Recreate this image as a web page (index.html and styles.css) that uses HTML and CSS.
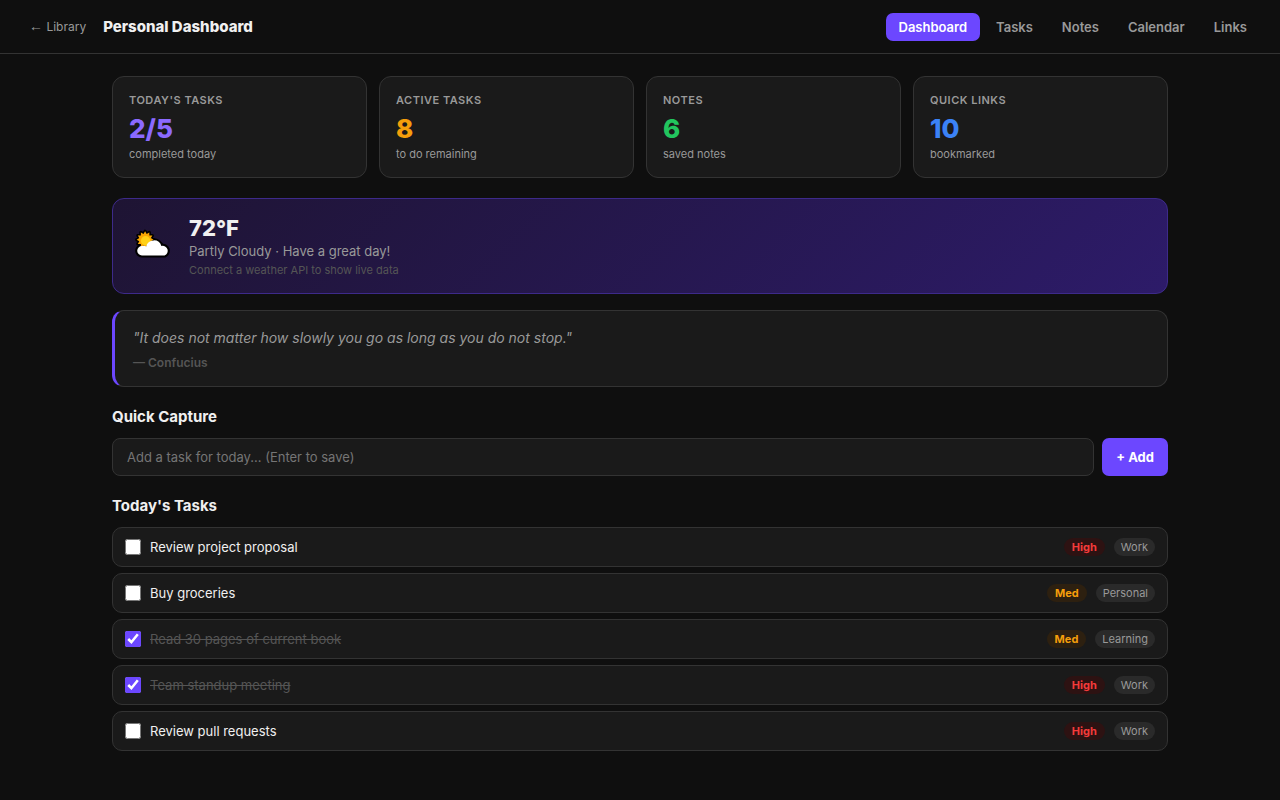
FILE: index.html
```html
<!DOCTYPE html>
<html lang="en">
<head>
    <meta charset="UTF-8">
    <meta name="viewport" content="width=device-width, initial-scale=1.0">
    <title>Personal Dashboard</title>
    <link rel="stylesheet" href="styles.css">
</head>
<body>
    <header class="topbar">
        <a class="back" href="#library"><span class="arrow">←</span> Library</a>
        <h1 class="title">Personal Dashboard</h1>
        <nav class="nav">
            <button class="nav-btn active">Dashboard</button>
            <button class="nav-btn">Tasks</button>
            <button class="nav-btn">Notes</button>
            <button class="nav-btn">Calendar</button>
            <button class="nav-btn">Links</button>
        </nav>
    </header>

    <main class="page">
        <div class="stats">
            <div class="stat">
                <div class="stat-label">Today's Tasks</div>
                <div class="stat-value purple">2/5</div>
                <div class="stat-sub">completed today</div>
            </div>
            <div class="stat">
                <div class="stat-label">Active Tasks</div>
                <div class="stat-value orange">8</div>
                <div class="stat-sub">to do remaining</div>
            </div>
            <div class="stat">
                <div class="stat-label">Notes</div>
                <div class="stat-value green">6</div>
                <div class="stat-sub">saved notes</div>
            </div>
            <div class="stat">
                <div class="stat-label">Quick Links</div>
                <div class="stat-value blue">10</div>
                <div class="stat-sub">bookmarked</div>
            </div>
        </div>

        <div class="weather">
            <svg class="weather-icon" viewBox="1 1 38 38" aria-hidden="true">
                <g fill="#000" stroke="#000" stroke-width="4" stroke-linejoin="round">
                    <path stroke-width="3" d="M20.5 14L18 15.5 19.4 18 16.500 18 16.500 20.900 14 19.500 12.500 22 11 19.500 8.500 20.900 8.500 18 5.600 18 7 15.500 4.500 14 7 12.500 5.600 10 8.500 10 8.500 7.100 11 8.500 12.500 6 14 8.500 16.500 7.100 16.500 10 19.400 10 18 12.500z"/>
                    <path d="M9.500 29a4.500 4.500 0 0 1 0-9 5 5 0 0 1 4 .5A7.500 7.500 0 0 1 28 20a4.750 4.750 0 0 1 3 9z"/>
                </g>
                <path fill="#f9a602" d="M20.5 14L18 15.5 19.4 18 16.500 18 16.500 20.900 14 19.500 12.500 22 11 19.500 8.500 20.900 8.500 18 5.600 18 7 15.500 4.500 14 7 12.500 5.600 10 8.500 10 8.500 7.100 11 8.500 12.500 6 14 8.500 16.500 7.100 16.500 10 19.400 10 18 12.500z"/>
                <circle cx="13" cy="15" r="4.500" fill="#ffd116"/>
                <path fill="#fff" d="M9.500 29a4.500 4.500 0 0 1 0-9 5 5 0 0 1 4 .5A7.500 7.500 0 0 1 28 20a4.750 4.750 0 0 1 3 9z"/>
            </svg>
            <div>
                <div class="temp">72°F</div>
                <div class="condition">Partly Cloudy · Have a great day!</div>
                <div class="weather-note">Connect a weather API to show live data</div>
            </div>
        </div>

        <div class="quote">
            <div class="quote-text">"It does not matter how slowly you go as long as you do not stop."</div>
            <div class="quote-author">— Confucius</div>
        </div>

        <h2 class="section-title"><label for="capture">Quick Capture</label></h2>
        <form class="capture">
            <input class="capture-input" id="capture" type="text" placeholder="Add a task for today... (Enter to save)">
            <button class="add-btn" type="button">+ Add</button>
        </form>

        <h2 class="section-title">Today's Tasks</h2>
        <div class="tasks">
            <div class="task">
                <input type="checkbox" id="task1">
                <label for="task1">Review project proposal</label>
                <span class="tag high">High</span>
                <span class="tag">Work</span>
            </div>
            <div class="task">
                <input type="checkbox" id="task2">
                <label for="task2">Buy groceries</label>
                <span class="tag med">Med</span>
                <span class="tag">Personal</span>
            </div>
            <div class="task done">
                <input type="checkbox" id="task3" checked>
                <label for="task3">Read 30 pages of current book</label>
                <span class="tag med">Med</span>
                <span class="tag">Learning</span>
            </div>
            <div class="task done">
                <input type="checkbox" id="task4" checked>
                <label for="task4">Team standup meeting</label>
                <span class="tag high">High</span>
                <span class="tag">Work</span>
            </div>
            <div class="task">
                <input type="checkbox" id="task5">
                <label for="task5">Review pull requests</label>
                <span class="tag high">High</span>
                <span class="tag">Work</span>
            </div>
        </div>
    </main>
</body>
</html>
```
FILE: styles.css
```css
* {
    box-sizing: border-box;
    margin: 0;
    padding: 0;
}
body {
    font-family: Inter, sans-serif;
    font-size: 13px;
    background: #0f0f0f;
    color: #f0f0f0;
}
button, input {
    font-family: inherit;
    font-size: 13px;
}
.topbar {
    display: flex;
    align-items: center;
    gap: 8px;
    min-height: 54px;
    padding: 0 20px;
    border-bottom: 1px solid #333;
}
.back {
    padding: 4px 9px;
    font-size: 12px;
    line-height: 16px;
    color: #999;
    text-decoration: none;
}
.arrow {
    font-family: "Liberation Sans", sans-serif;
    font-size: 14px;
}
.title {
    flex: 1;
    font-size: 15px;
    font-weight: 800;
}
.nav {
    display: flex;
    gap: 3px;
}
.nav-btn {
    padding: 6px 13px;
    border: none;
    border-radius: 7px;
    background: none;
    color: #999;
    font-weight: 600;
    line-height: 16px;
    cursor: pointer;
}
.nav-btn.active {
    background: #6c47ff;
    color: #fff;
}
.page {
    max-width: 1104px;
    margin: 0 auto;
    padding: 22px 24px;
}
.stats {
    display: grid;
    grid-template-columns: repeat(4, 1fr);
    gap: 12px;
    margin-bottom: 20px;
}
.stat {
    padding: 16px;
    background: #1a1a1a;
    border: 1px solid #333;
    border-radius: 12px;
}
.stat-label {
    margin-bottom: 4px;
    font-size: 11px;
    font-weight: 600;
    line-height: 14px;
    letter-spacing: 0.5px;
    text-transform: uppercase;
    color: #999;
}
.stat-value {
    font-size: 26px;
    font-weight: 800;
    line-height: 36px;
}
.stat-sub {
    font-size: 11px;
    line-height: 14px;
    color: #999;
}
.purple { color: #8b6aff; }
.orange { color: #f59e0b; }
.green { color: #22c55e; }
.blue { color: #3b82f6; }
.weather {
    display: flex;
    align-items: center;
    gap: 16px;
    margin-bottom: 16px;
    padding: 15px 20px;
    background: linear-gradient(135deg, #1e1433, #2d1b69);
    border: 1px solid #3d2a8a;
    border-radius: 12px;
}
.weather-icon {
    width: 40px;
    height: 40px;
}
.temp {
    font-size: 22px;
    font-weight: 800;
    line-height: 28px;
}
.condition {
    margin-bottom: 2px;
    font-size: 13px;
    line-height: 18px;
    color: #999;
}
.weather-note {
    font-size: 11px;
    line-height: 16px;
    color: #555;
}
.quote {
    margin-bottom: 20px;
    padding: 16px 18px;
    background: #1a1a1a;
    border: 1px solid #333;
    border-left: 3px solid #6c47ff;
    border-radius: 12px;
}
.quote-text {
    margin-bottom: 6px;
    font-size: 14px;
    font-style: italic;
    line-height: 22px;
    color: #999;
}
.quote-author {
    font-size: 12px;
    font-weight: 600;
    line-height: 15px;
    color: #555;
}
.section-title {
    margin-bottom: 12px;
    font-size: 15px;
    font-weight: 700;
    line-height: 19px;
}
.capture {
    display: flex;
    gap: 8px;
    margin-bottom: 20px;
}
.capture-input {
    flex: 1;
    min-width: 0;
    padding: 10px 14px;
    background: #1a1a1a;
    border: 1px solid #333;
    border-radius: 8px;
    color: #f0f0f0;
    line-height: 16px;
}
.capture-input::placeholder {
    color: #757575;
}
.add-btn {
    padding: 11px 14px;
    border: none;
    border-radius: 7px;
    background: #6c47ff;
    color: #fff;
    font-weight: 700;
    line-height: 16px;
    cursor: pointer;
}
.tasks {
    display: flex;
    flex-direction: column;
    gap: 6px;
}
.task {
    display: flex;
    align-items: center;
    gap: 9px;
    padding: 10px 12px;
    background: #1a1a1a;
    border: 1px solid #333;
    border-radius: 10px;
}
.task input {
    width: 16px;
    height: 16px;
    accent-color: #6c47ff;
}
.task label {
    flex: 1;
    line-height: 16px;
}
.task.done label {
    color: #555;
    text-decoration: line-through;
}
.tag {
    padding: 2px 7px;
    border-radius: 9px;
    background: #2a2a2a;
    color: #999;
    font-size: 11px;
    line-height: 14px;
}
.tag.high {
    padding: 2px 8px;
    background: #2d1212;
    color: #f53b3b;
    font-weight: 700;
}
.tag.med {
    padding: 2px 8px;
    background: #2d2010;
    color: #f59e0b;
    font-weight: 700;
}
```
